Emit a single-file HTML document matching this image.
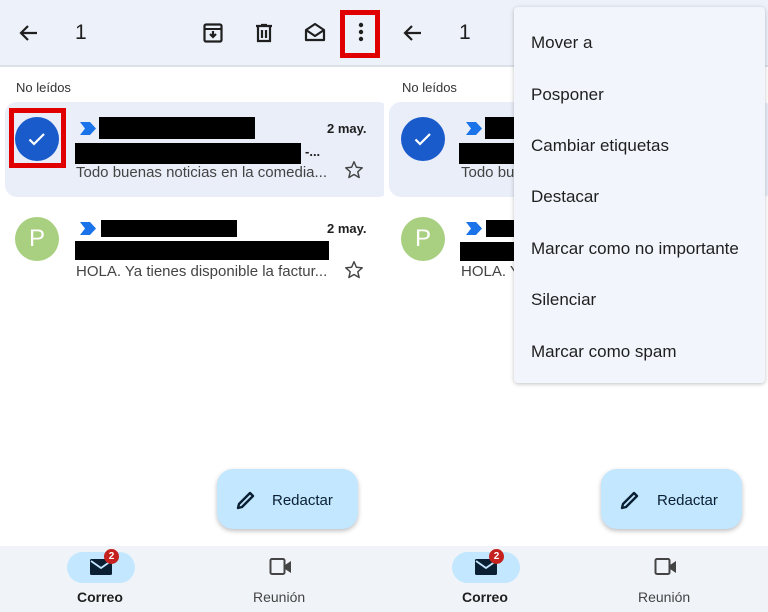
<!DOCTYPE html>
<html><head><meta charset="utf-8"><style>
*{margin:0;padding:0;box-sizing:border-box}
body{width:768px;height:612px;overflow:hidden;background:#fff;font-family:"Liberation Sans",sans-serif;color:#1f1f1f;position:relative}
.p{position:absolute;top:0;width:384px;height:612px;overflow:hidden;background:#fff}
.a{position:absolute}
.hdr{left:0;top:0;width:384px;height:67px;background:#edf1fa;border-bottom:2px solid #dde1e8}
.blk{background:#000}
.t{white-space:nowrap}
.menu{position:absolute;left:514px;top:7px;width:251px;height:376px;background:#f2f5fb;border-radius:4px;box-shadow:0 1px 4px rgba(0,0,0,.25)}
.menu div{position:absolute;left:17px;font-size:17px;color:#1f1f1f;white-space:nowrap}
</style></head><body>

<div class="p" style="left:0">
  <div class="a hdr"></div>
  <svg class="a" style="left:17px;top:21px" width="24" height="24" viewBox="0 0 24 24"><path d="M20 12H5M11 5l-7 7 7 7" fill="none" stroke="#1f1f1f" stroke-width="2.2"/></svg>
  <div class="a t" style="left:75px;top:21px;font-size:21px">1</div>
  <svg class="a" style="left:201px;top:21px" width="24" height="24" viewBox="0 0 24 24"><rect x="3.5" y="3.5" width="17" height="17" rx="1.5" fill="none" stroke="#1f1f1f" stroke-width="2.2"/><path d="M4 8h16" stroke="#1f1f1f" stroke-width="2"/><path d="M12 10v6M9 13l3 3 3-3" fill="none" stroke="#1f1f1f" stroke-width="2.2"/></svg>
  <svg class="a" style="left:252px;top:21px" width="24" height="24" viewBox="0 0 24 24"><path d="M4 5h16M9 4h6M6 5v15h12V5M10 9v8M14 9v8" fill="none" stroke="#1f1f1f" stroke-width="2.2"/></svg>
  <svg class="a" style="left:303px;top:20px" width="24" height="24" viewBox="0 0 24 24"><path d="M3 10l9-6 9 6v10H3z M3 10l9 6 9-6" fill="none" stroke="#1f1f1f" stroke-width="2.2" stroke-linejoin="round"/></svg>
  <svg class="a" style="left:349px;top:20px" width="24" height="24" viewBox="0 0 24 24"><circle cx="12" cy="5" r="2.2" fill="#1f1f1f"/><circle cx="12" cy="12" r="2.2" fill="#1f1f1f"/><circle cx="12" cy="19" r="2.2" fill="#1f1f1f"/></svg>
  <div class="a" style="left:340px;top:10px;width:40px;height:48px;border:5px solid #e00000"></div>

  <div class="a t" style="left:16px;top:80px;font-size:13px;color:#333">No leídos</div>
  <div class="a" style="left:5px;top:102px;width:385px;height:95px;background:#e9eef9;border-radius:12px"></div>
  <div class="a" style="left:15px;top:117px;width:44px;height:44px;border-radius:50%;background:#1a5bcc"></div>
  <svg class="a" style="left:26px;top:128px" width="22" height="22" viewBox="0 0 22 22"><path d="M3.5 11.5l4.5 4.5 10-10" fill="none" stroke="#fff" stroke-width="2.2"/></svg>
  <div class="a" style="left:9px;top:108px;width:57px;height:60px;border:5px solid #e00000"></div>
  <svg class="a" style="left:80px;top:122px" width="16" height="13" viewBox="0 0 16 13"><path d="M0 0h10l6 6.5-6 6.5H0l5-6.5z" fill="#1a73e8"/></svg>
  <div class="a blk" style="left:99px;top:117px;width:156px;height:22px"></div>
  <div class="a t" style="left:327px;top:121px;font-size:13px;font-weight:bold">2 may.</div>
  <div class="a blk" style="left:75px;top:143px;width:226px;height:21px"></div>
  <div class="a t" style="left:305px;top:144px;font-size:13px;font-weight:bold">-...</div>
  <div class="a t" style="left:76px;top:164px;font-size:15px;color:#444">Todo buenas noticias en la comedia...</div>
  <svg class="a" style="left:343px;top:159px" width="22" height="22" viewBox="0 0 24 24"><path d="M12 3l2.6 6 6.4.6-4.9 4.3 1.5 6.3L12 16.9 6.4 20.2l1.5-6.3L3 9.6 9.4 9z" fill="none" stroke="#444" stroke-width="1.6" stroke-linejoin="round"/></svg>

  <div class="a" style="left:15px;top:217px;width:44px;height:44px;border-radius:50%;background:#a8d080;color:#fff;font-size:24px;text-align:center;line-height:44px">P</div>
  <svg class="a" style="left:80px;top:222px" width="16" height="13" viewBox="0 0 16 13"><path d="M0 0h10l6 6.5-6 6.5H0l5-6.5z" fill="#1a73e8"/></svg>
  <div class="a blk" style="left:101px;top:220px;width:136px;height:17px"></div>
  <div class="a t" style="left:327px;top:221px;font-size:13px;font-weight:bold">2 may.</div>
  <div class="a blk" style="left:75px;top:241px;width:254px;height:19px"></div>
  <div class="a t" style="left:76px;top:263px;font-size:15px;color:#444">HOLA. Ya tienes disponible la factur...</div>
  <svg class="a" style="left:343px;top:259px" width="22" height="22" viewBox="0 0 24 24"><path d="M12 3l2.6 6 6.4.6-4.9 4.3 1.5 6.3L12 16.9 6.4 20.2l1.5-6.3L3 9.6 9.4 9z" fill="none" stroke="#444" stroke-width="1.6" stroke-linejoin="round"/></svg>

  <div class="a" style="left:217px;top:469px;width:141px;height:60px;background:#c2e7ff;border-radius:16px;box-shadow:0 2px 5px rgba(0,0,0,.25)"></div>
  <svg class="a" style="left:234px;top:488px" width="24" height="24" viewBox="0 0 24 24"><path d="M4 20l1-4L16 5l3 3L8 19z" fill="none" stroke="#0b1f33" stroke-width="2.4" stroke-linejoin="round"/></svg>
  <div class="a t" style="left:272px;top:492px;font-size:15px;color:#0b1f33">Redactar</div>

  <div class="a" style="left:0;top:546px;width:384px;height:66px;background:#f0f4f9"></div>
  <div class="a" style="left:67px;top:552px;width:68px;height:31px;background:#c2e7ff;border-radius:16px"></div>
  <svg class="a" style="left:90px;top:558px" width="22" height="18" viewBox="0 0 22 18"><rect x="0" y="1" width="22" height="16" rx="1.5" fill="#0b1f33"/><path d="M1 3l10 7 10-7" fill="none" stroke="#c2e7ff" stroke-width="1.8"/></svg>
  <div class="a" style="left:104px;top:549px;width:15px;height:15px;border-radius:50%;background:#c5221f;color:#fff;font-size:10px;font-weight:bold;text-align:center;line-height:15px">2</div>
  <div class="a t" style="left:77px;top:589px;font-size:14px;font-weight:bold">Correo</div>
  <svg class="a" style="left:269px;top:557px" width="24" height="20" viewBox="0 0 24 20"><rect x="1.5" y="2" width="14" height="15" rx="1.5" fill="none" stroke="#444" stroke-width="2"/><path d="M16 8l6-4v12l-6-4z" fill="#444"/></svg>
  <div class="a t" style="left:253px;top:589px;font-size:14px;color:#444">Reunión</div>
</div>

<div class="p" style="left:384px">
  <div class="a hdr"></div>
  <svg class="a" style="left:17px;top:21px" width="24" height="24" viewBox="0 0 24 24"><path d="M20 12H5M11 5l-7 7 7 7" fill="none" stroke="#1f1f1f" stroke-width="2.2"/></svg>
  <div class="a t" style="left:75px;top:21px;font-size:21px">1</div>

  <div class="a t" style="left:18px;top:80px;font-size:13px;color:#333">No leídos</div>
  <div class="a" style="left:5px;top:102px;width:385px;height:95px;background:#e9eef9;border-radius:12px"></div>
  <div class="a" style="left:17px;top:117px;width:44px;height:44px;border-radius:50%;background:#1a5bcc"></div>
  <svg class="a" style="left:28px;top:128px" width="22" height="22" viewBox="0 0 22 22"><path d="M3.5 11.5l4.5 4.5 10-10" fill="none" stroke="#fff" stroke-width="2.2"/></svg>
  <svg class="a" style="left:82px;top:122px" width="16" height="13" viewBox="0 0 16 13"><path d="M0 0h10l6 6.5-6 6.5H0l5-6.5z" fill="#1a73e8"/></svg>
  <div class="a blk" style="left:101px;top:117px;width:156px;height:22px"></div>
  <div class="a blk" style="left:75px;top:143px;width:226px;height:21px"></div>
  <div class="a t" style="left:77px;top:164px;font-size:15px;color:#444">Todo buenas noticias en la comedia...</div>

  <div class="a" style="left:17px;top:217px;width:44px;height:44px;border-radius:50%;background:#a8d080;color:#fff;font-size:24px;text-align:center;line-height:44px">P</div>
  <svg class="a" style="left:82px;top:222px" width="16" height="13" viewBox="0 0 16 13"><path d="M0 0h10l6 6.5-6 6.5H0l5-6.5z" fill="#1a73e8"/></svg>
  <div class="a blk" style="left:102px;top:220px;width:136px;height:17px"></div>
  <div class="a blk" style="left:76px;top:242px;width:254px;height:19px"></div>
  <div class="a t" style="left:77px;top:263px;font-size:15px;color:#444">HOLA. Ya tienes disponible la factur...</div>

  <div class="a" style="left:217px;top:469px;width:141px;height:60px;background:#c2e7ff;border-radius:16px;box-shadow:0 2px 5px rgba(0,0,0,.25)"></div>
  <svg class="a" style="left:234px;top:488px" width="24" height="24" viewBox="0 0 24 24"><path d="M4 20l1-4L16 5l3 3L8 19z" fill="none" stroke="#0b1f33" stroke-width="2.4" stroke-linejoin="round"/></svg>
  <div class="a t" style="left:273px;top:492px;font-size:15px;color:#0b1f33">Redactar</div>

  <div class="a" style="left:0;top:546px;width:384px;height:66px;background:#f0f4f9"></div>
  <div class="a" style="left:68px;top:552px;width:68px;height:31px;background:#c2e7ff;border-radius:16px"></div>
  <svg class="a" style="left:91px;top:558px" width="22" height="18" viewBox="0 0 22 18"><rect x="0" y="1" width="22" height="16" rx="1.5" fill="#0b1f33"/><path d="M1 3l10 7 10-7" fill="none" stroke="#c2e7ff" stroke-width="1.8"/></svg>
  <div class="a" style="left:105px;top:549px;width:15px;height:15px;border-radius:50%;background:#c5221f;color:#fff;font-size:10px;font-weight:bold;text-align:center;line-height:15px">2</div>
  <div class="a t" style="left:78px;top:589px;font-size:14px;font-weight:bold">Correo</div>
  <svg class="a" style="left:270px;top:557px" width="24" height="20" viewBox="0 0 24 20"><rect x="1.5" y="2" width="14" height="15" rx="1.5" fill="none" stroke="#444" stroke-width="2"/><path d="M16 8l6-4v12l-6-4z" fill="#444"/></svg>
  <div class="a t" style="left:254px;top:589px;font-size:14px;color:#444">Reunión</div>
</div>

<div class="menu">
  <div style="top:26px">Mover a</div>
  <div style="top:78px">Posponer</div>
  <div style="top:129px">Cambiar etiquetas</div>
  <div style="top:180px">Destacar</div>
  <div style="top:232px">Marcar como no importante</div>
  <div style="top:283px">Silenciar</div>
  <div style="top:335px">Marcar como spam</div>
</div>
</body></html>
